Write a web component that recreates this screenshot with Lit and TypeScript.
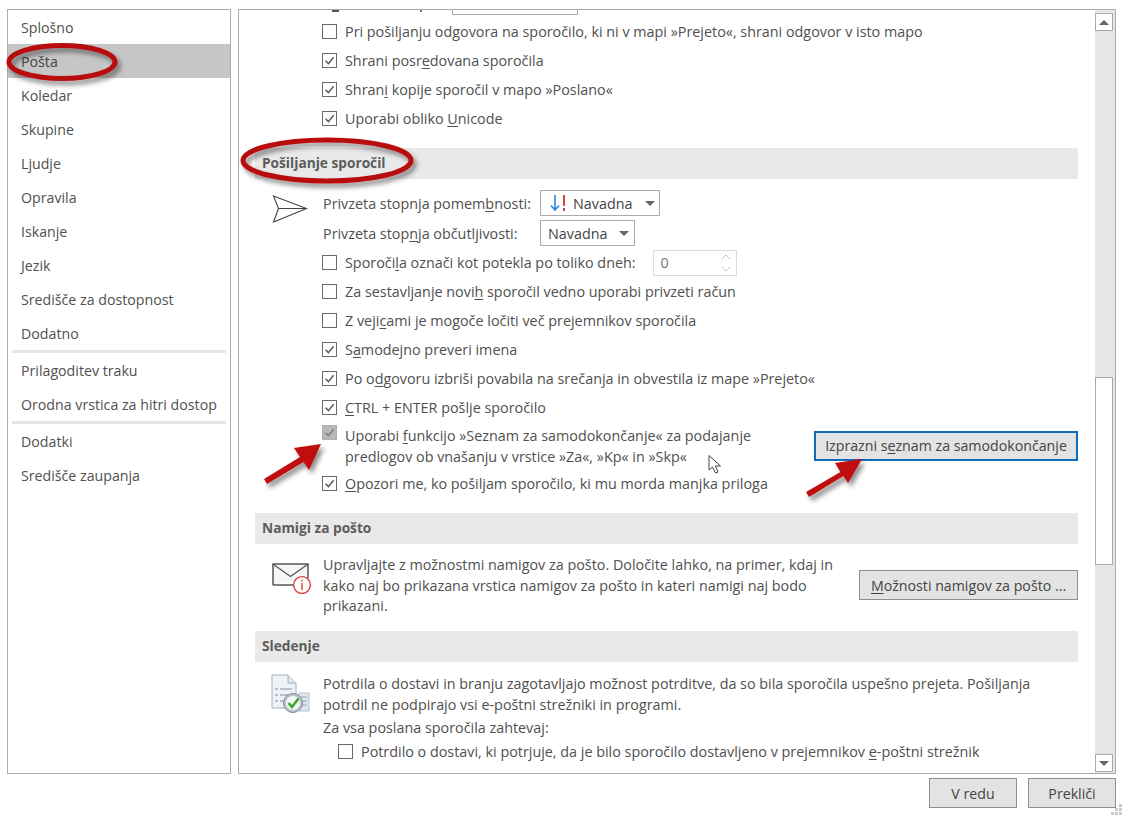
import { LitElement, html, css, svg } from "lit";
import { customElement } from "lit/decorators.js";

const check = svg`<svg class="tick" viewBox="0 0 13 13" width="13" height="13"><path d="M2.6 6.8 L5.4 9.6 L10.6 3.2" fill="none" stroke="currentColor" stroke-width="1.5"/></svg>`;

@customElement("app-root")
export class AppRoot extends LitElement {
  static styles = css`
    :host { display: block; width: 1123px; height: 817px; position: relative; overflow: hidden; background: #fff;
      font-family: "Open Sans", "Noto Sans", sans-serif; font-size: 14.35px; color: #505050; }
    * { box-sizing: border-box; }
    u { text-underline-offset: 2px; text-decoration-thickness: 1px; }
    .page { height: 817px; padding: 9px 7px 0 7px; display: flex; flex-direction: column; }
    .top { display: flex; gap: 7px; height: 765px; }
    .side { width: 224px; border: 1px solid #ababab; flex: none; font-size: 14.2px; }
    .nav { height: 34px; display: flex; align-items: center; padding-left: 13px; }
    .nav.sel { background: #c6c6c6; color: #444; }
    .sep { height: 3px; background: #e6e6e6; margin: 0 4px; }
    .main { flex: 1; min-width: 0; border: 1px solid #ababab; display: flex; overflow: hidden; }
    .content { flex: 1; min-width: 0; padding: 0 17px 0 16px; }
    .clip { height: 7px; display: flex; align-items: flex-start; padding-left: 77px; }
    .clip b { display: block; width: 7px; height: 1.5px; background: #555; }
    .clip em { display: block; width: 2px; height: 2px; background: #777; margin-left: 81px; }
    .clip i { display: block; width: 126px; height: 5px; border: 1px solid #ababab; border-top: 0; margin-left: 30px; }
    .row { display: flex; align-items: center; height: 29px; white-space: nowrap; gap: 8px; padding-left: 67px; }
    .row.lead { height: 30px; gap: 0; padding-left: 68px; }
    .row.sub { padding-left: 83px; height: 25px; }
    .box { width: 15px; height: 15px; border: 1px solid #6a6a6a; background: #fff; flex: none; color: #5a5a5a;
      display: flex; align-items: center; justify-content: center; }
    .box.dis { background: #b8b8b8; border-color: #b0b0b0; color: #7d7d7d; }
    .tick { display: block; }
    .hd { height: 31px; background: #e9e9e9; font-weight: 700; font-size: 13.7px; color: #5c5c5c;
      display: flex; align-items: center; padding: 0 0 2px 7px; }
    .hd.s1 { margin-top: 15px; margin-bottom: 9px; }
    .hd.s2 { margin-top: 15px; }
    .hd.s3 { margin-top: 15px; }
    .grp { position: relative; }
    .lab { display: block; }
    .lab.w1 { width: 217px; }
    .sel-box { height: 26px; border: 1px solid #ababab; display: flex; align-items: center; color: #444; background: #fff; }
    .sel-box .car { width: 0; height: 0; border-left: 5px solid transparent; border-right: 5px solid transparent; border-top: 5px solid #666; margin-left: auto; }
    .sb1 { width: 120px; padding: 0 4px 0 8px; }
    .sb2 { width: 95px; padding: 0 5px 0 7px; }
    .spin { width: 84px; height: 26px; border: 1px solid #dcdcdc; margin-left: 9px; display: flex; align-items: center; justify-content: space-between; padding: 0 4px 0 7px; color: #777; }
    .spin svg { display: block; }
    .tworow { display: flex; align-items: center; height: 47px; padding-left: 67px; }
    .tw { display: flex; gap: 8px; line-height: 21px; white-space: nowrap; }
    .btn { height: 30px; background: #e3e3e3; border: 1px solid #8f8f8f; color: #444; display: flex; align-items: center; justify-content: center; white-space: nowrap; font: inherit; font-size: 14.2px; padding: 0; }
    .btn.focus { border: 2px solid #0f6cbd; width: 264px; margin-left: auto; }
    .btn.tips { width: 219px; margin-left: auto; margin-top: 15px; }
    .ic { display: flex; padding-top: 11px; align-items: flex-start; }
    .ic.follow { padding-top: 12px; }
    .ic .ico { width: 68px; height: 41px; flex: none; padding-left: 17px; }
    .ic .ico.mail svg { margin-top: 8px; display: block; }
    .ic .ico.track svg { margin-left: -1px; display: block; }
    .ic .txt { line-height: 20.5px; white-space: nowrap; }
    .ic .txt.three { height: 61px; }
    .plain { height: 24px; display: flex; align-items: center; padding-left: 68px; white-space: nowrap; }
    .send { position: absolute; left: 17px; top: 6px; }
    .bar { width: 20px; flex: none; background: #e6e6e6; display: flex; flex-direction: column; padding-top: 3px; padding-bottom: 1px; }
    .sbtn { width: 18px; height: 18px; background: #fff; border: 1px solid #ababab; display: flex; align-items: center; justify-content: center; flex: none; }
    .thumb { width: 18px; height: 188px; margin-top: 346px; background: #fff; border: 1px solid #ababab; flex: none; }
    .bar .gap { flex: 1; }
    .up { width: 0; height: 0; border-left: 5px solid transparent; border-right: 5px solid transparent; border-bottom: 5px solid #666; }
    .dn { width: 0; height: 0; border-left: 5px solid transparent; border-right: 5px solid transparent; border-top: 5px solid #666; }
    .foot { display: flex; justify-content: flex-end; gap: 11px; margin-top: 4px; }
    .foot .btn { width: 88px; height: 30px; }
    .grip { position: absolute; right: 1px; bottom: 1px; }
    .overlay { position: absolute; left: 0; top: 0; pointer-events: none; }
  `;

  private cb(on: boolean, dis = false) {
    return html`<span class="box ${dis ? "dis" : ""}">${on ? check : ""}</span>`;
  }

  render() {
    return html`
      <div class="page">
        <div class="top">
          <nav class="side">
            <div class="nav">Splošno</div>
            <div class="nav sel">Pošta</div>
            <div class="nav">Koledar</div>
            <div class="nav">Skupine</div>
            <div class="nav">Ljudje</div>
            <div class="nav">Opravila</div>
            <div class="nav">Iskanje</div>
            <div class="nav">Jezik</div>
            <div class="nav">Središče za dostopnost</div>
            <div class="nav">Dodatno</div>
            <div class="sep"></div>
            <div class="nav">Prilagoditev traku</div>
            <div class="nav">Orodna vrstica za hitri dostop</div>
            <div class="sep"></div>
            <div class="nav">Dodatki</div>
            <div class="nav">Središče zaupanja</div>
          </nav>
          <div class="main">
            <div class="content">
              <div class="clip"><b></b><em></em><i></i></div>
              <div class="row">${this.cb(false)}<span>Pri pošiljanju odgovora na sporočilo, ki ni v mapi »Prejeto«, shrani odgovor v isto mapo</span></div>
              <div class="row">${this.cb(true)}<span>Shrani posr<u>e</u>dovana sporočila</span></div>
              <div class="row">${this.cb(true)}<span>Shran<u>i</u> kopije sporočil v mapo »Poslano«</span></div>
              <div class="row">${this.cb(true)}<span>Uporabi obliko <u>U</u>nicode</span></div>

              <div class="hd s1">Pošiljanje sporočil</div>
              <div class="grp">
                <svg class="send" width="36" height="30" viewBox="0 0 36 30"><path d="M1.5 2 L34.5 14.5 L1.5 28 L6.5 14.5 Z M6.5 14.5 H34.5" fill="none" stroke="#444" stroke-width="1.1"/></svg>
                <div class="row lead"><span class="lab w1">Privzeta stopnja pomem<u>b</u>nosti:</span>
                  <div class="sel-box sb1">
                    <svg width="24" height="20" viewBox="0 0 24 20"><path d="M6 2 V17 M2 12.5 L6 17 L10 12.5" fill="none" stroke="#2b88d8" stroke-width="1.6"/><path d="M15 2 V13 M15 15 V18" fill="none" stroke="#e04343" stroke-width="2"/></svg>
                    <span>Navadna</span><span class="car"></span>
                  </div>
                </div>
                <div class="row lead"><span class="lab w1">Privzeta stop<u>n</u>ja občutljivosti:</span>
                  <div class="sel-box sb2"><span>Navadna</span><span class="car"></span></div>
                </div>
              </div>
              <div class="row">${this.cb(false)}<span>Sporoči<u>l</u>a označi kot potekla po toliko dneh:</span>
                <div class="spin"><span>0</span><svg width="12" height="22" viewBox="0 0 12 22"><path d="M2 7 L6 3 L10 7 M2 15 L6 19 L10 15" fill="none" stroke="#c4c4c4" stroke-width="1"/></svg></div>
              </div>
              <div class="row">${this.cb(false)}<span>Za sestavljanje novi<u>h</u> sporočil vedno uporabi privzeti račun</span></div>
              <div class="row">${this.cb(false)}<span>Z veji<u>c</u>ami je mogoče ločiti več prejemnikov sporočila</span></div>
              <div class="row">${this.cb(true)}<span>S<u>a</u>modejno preveri imena</span></div>
              <div class="row">${this.cb(true)}<span>Po o<u>d</u>govoru izbriši povabila na srečanja in obvestila iz mape »Prejeto«</span></div>
              <div class="row">${this.cb(true)}<span><u>C</u>TRL + ENTER pošlje sporočilo</span></div>
              <div class="tworow">
                <div class="tw">${this.cb(true, true)}<span>Uporabi <u>f</u>unkcijo »Seznam za samodokončanje« za podajanje<br>predlogov ob vnašanju v vrstice »Za«, »Kp« in »Skp«</span></div>
                <button class="btn focus"><span>Izprazni s<u>e</u>znam za samodokončanje</span></button>
              </div>
              <div class="row">${this.cb(true)}<span><u>O</u>pozori me, ko pošiljam sporočilo, ki mu morda manjka priloga</span></div>

              <div class="hd s2">Namigi za pošto</div>
              <div class="ic">
                <div class="ico mail">
                  <svg width="40" height="31" viewBox="0 0 40 31"><path d="M1 22 V1 H36 V15 M1 22 H21" fill="#f6f6f6" stroke="#555" stroke-width="1.5"/><path d="M1.5 1.5 L18.5 13.5 L35.5 1.5" fill="none" stroke="#555" stroke-width="1.3"/><circle cx="30" cy="22" r="8.4" fill="#fff" stroke="#e23838" stroke-width="1.4"/><path d="M30 20 V27 M30 16.5 V18.2" stroke="#e23838" stroke-width="1.4"/></svg>
                </div>
                <div class="txt three">Upravljajte z možnostmi namigov za pošto. Določite lahko, na primer, kdaj in<br>kako naj bo prikazana vrstica namigov za pošto in kateri namigi naj bodo<br>prikazani.</div>
                <button class="btn tips"><span><u>M</u>ožnosti namigov za pošto ...</span></button>
              </div>

              <div class="hd s3">Sledenje</div>
              <div class="ic follow">
                <div class="ico track">
                  <svg width="40" height="40" viewBox="0 0 40 40"><path d="M1 1 H17 L25 9 V34 H1 Z" fill="#eef2f7" stroke="#9fb0c2"/><path d="M17 1 V9 H25" fill="#dfe6ee" stroke="#9fb0c2"/><path d="M4 15 H7 M9 15 H21 M4 21 H7 M9 21 H17 M4 27 H7 M9 27 H14" stroke="#7f8fa3" stroke-width="1.2"/><path d="M28 19 H38 V37 H28 Z" fill="#dfe6ee" stroke="#b6c2cf"/><path d="M30 23 H36 M30 27 H36 M30 31 H36" stroke="#9aa8b6"/><circle cx="22" cy="29" r="9.5" fill="#bcc5cc" stroke="#7d8a96"/><circle cx="22" cy="29" r="7" fill="#f4f7f8"/><path d="M17.5 29 L21 33 L27.5 24.5" fill="none" stroke="#3fa52c" stroke-width="2.6"/></svg>
                </div>
                <div class="txt">Potrdila o dostavi in branju zagotavljajo možnost potrditve, da so bila sporočila uspešno prejeta. Pošiljanja<br>potrdil ne podpirajo vsi e-poštni strežniki in programi.</div>
              </div>
              <div class="plain">Za vsa poslana sporočila zahtevaj:</div>
              <div class="row sub">${this.cb(false)}<span>Potrdilo o dostavi, ki potrjuje, da je bilo sporočilo dostavljeno v prejemnikov <u>e</u>-poštni strežnik</span></div>
            </div>
            <div class="bar">
              <div class="sbtn"><span class="up"></span></div>
              <div class="thumb"></div>
              <div class="gap"></div>
              <div class="sbtn"><span class="dn"></span></div>
            </div>
          </div>
        </div>
        <div class="foot">
          <button class="btn">V redu</button>
          <button class="btn">Prekliči</button>
        </div>
      </div>
      <svg class="grip" width="12" height="12" viewBox="0 0 12 12" fill="#c9c9c9"><rect x="9" y="0" width="3" height="3"/><rect x="5" y="4" width="3" height="3"/><rect x="9" y="4" width="3" height="3"/><rect x="1" y="8" width="3" height="3"/><rect x="5" y="8" width="3" height="3"/><rect x="9" y="8" width="3" height="3"/></svg>
      <svg class="overlay" width="1123" height="817" viewBox="0 0 1123 817">
        <defs><filter id="sh" x="-20%" y="-30%" width="150%" height="170%"><feDropShadow dx="3" dy="4" stdDeviation="2.5" flood-color="#000" flood-opacity=".45"/></filter></defs>
        <g filter="url(#sh)" fill="none" stroke="#b80a10" stroke-width="5">
          <ellipse cx="62" cy="62" rx="53" ry="16.5"/>
          <ellipse cx="327" cy="160.5" rx="84" ry="20.5"/>
        </g>
        <g filter="url(#sh)" fill="#c00a10">
          <path d="M321 444 L294 448 L300 457 L264 479 L267 484 L303.5 462 L309 470 Z"/>
          <path d="M862 459 L835 463 L840.5 472 L806 492 L809 497 L843.5 476 L848 483 Z"/>
        </g>
        <path d="M709 455.5 V470 L712.5 467 L715.5 473 L718 472 L715.5 466 L720.5 466 Z" fill="#fff" stroke="#444" stroke-width="1"/>
      </svg>
    `;
  }
}
